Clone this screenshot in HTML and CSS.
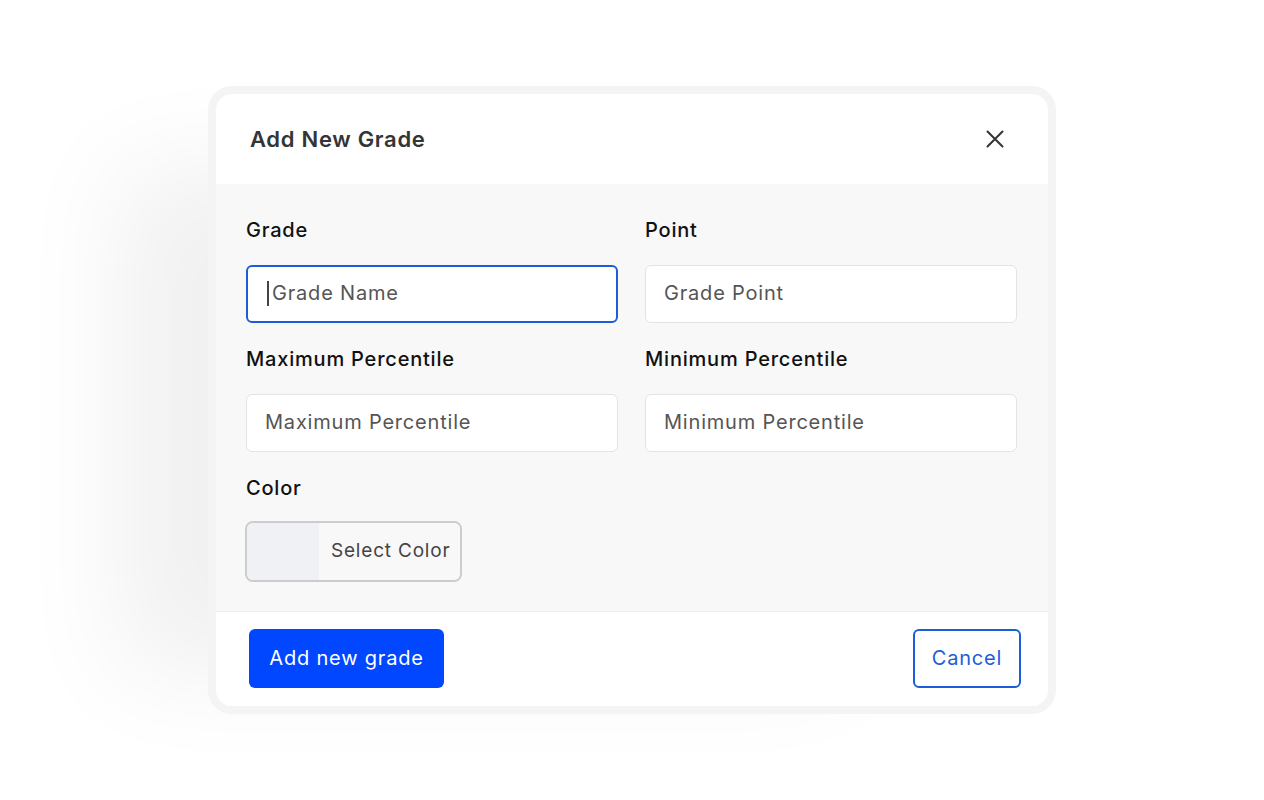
FILE: index.html
```html
<!DOCTYPE html>
<html lang="en">
<head>
    <meta charset="UTF-8">
    <title>Add New Grade</title>
    <link rel="stylesheet" href="styles.css">
</head>
<body>

    <div class="modal-frame">
        <div class="modal">

            <!-- Header -->
            <div class="modal-header">
                <h2 class="modal-title">Add New Grade</h2>
                <button class="close-btn" aria-label="Close">
                    <svg width="18" height="18" viewBox="0 0 18 18" fill="none" stroke="#333" stroke-width="2" stroke-linecap="round">
                        <path d="M1.5 1.5L16.5 16.5M16.5 1.5L1.5 16.5"/>
                    </svg>
                </button>
            </div>

            <!-- Form -->
            <div class="modal-body">
                <div class="form-grid">
                    <div class="field">
                        <label>Grade</label>
                        <div class="input focused"><span class="caret"></span>Grade Name</div>
                    </div>
                    <div class="field">
                        <label>Point</label>
                        <div class="input">Grade Point</div>
                    </div>
                    <div class="field">
                        <label>Maximum Percentile</label>
                        <div class="input">Maximum Percentile</div>
                    </div>
                    <div class="field">
                        <label>Minimum Percentile</label>
                        <div class="input">Minimum Percentile</div>
                    </div>
                    <div class="field">
                        <label>Color</label>
                        <div class="color-picker">
                            <span class="swatch"></span>
                            <span class="color-text">Select Color</span>
                        </div>
                    </div>
                </div>
            </div>

            <!-- Footer -->
            <div class="modal-footer">
                <button class="btn btn-primary">Add new grade</button>
                <button class="btn btn-outline">Cancel</button>
            </div>

        </div>
    </div>

</body>
</html>
```

FILE: styles.css
```css
body {
    margin: 0;
    height: 100vh;
    background: #fff;
    display: flex;
    justify-content: center;
    align-items: center;
    font-family: Inter, "Noto Sans", sans-serif;
    letter-spacing: 0.8px;
}

.modal-frame {
    border: 8px solid #f4f4f4;
    border-radius: 24px;
    background: #f4f4f4;
    box-shadow: -150px 20px 100px -60px rgba(0, 0, 0, 0.06);
}

.modal {
    width: 832px;
    border-radius: 16px;
    overflow: hidden;
    background: #fff;
}

.modal-header {
    height: 90px;
    padding: 0 44px 0 34px;
    display: flex;
    align-items: center;
    justify-content: space-between;
}

.modal-title {
    margin: 0;
    font-size: 22px;
    font-weight: 600;
    color: #333538;
    letter-spacing: 0.7px;
}

.close-btn {
    border: none;
    background: none;
    padding: 0;
    width: 18px;
    height: 18px;
    display: flex;
}

.modal-body {
    background: #f8f8f8;
    padding: 34px 31px 29px 30px;
    border-bottom: 1px solid #eeeeee;
}

.form-grid {
    display: grid;
    grid-template-columns: 372px 372px;
    column-gap: 27px;
    row-gap: 24px;
}

.field label {
    display: block;
    font-size: 20px;
    font-weight: 500;
    color: #111;
    line-height: 24px;
    margin-bottom: 23px;
}

.input {
    box-sizing: border-box;
    height: 58px;
    background: #fff;
    border: 1px solid #e4e4e4;
    border-radius: 6px;
    padding: 0 18px 2px;
    display: flex;
    align-items: center;
    font-size: 20px;
    color: #555;
}

.input.focused {
    border: 2px solid #1c5ed8;
    padding: 0 17px 2px 19px;
}

.caret {
    width: 2px;
    height: 25px;
    background: #444;
    margin-right: 3px;
}

.color-picker {
    width: 217px;
    height: 61px;
    box-sizing: border-box;
    border: 2px solid #cccccc;
    border-radius: 8px;
    overflow: hidden;
    display: flex;
    margin-left: -1px;
    margin-top: -2px;
}

.swatch {
    width: 72px;
    background: #f0f1f5;
}

.color-text {
    flex: 1;
    display: flex;
    align-items: center;
    padding: 0 0 2px 12px;
    font-size: 19px;
    color: #444;
    background: #f8f8f8;
}

.modal-footer {
    background: #fff;
    padding: 17px 27px 18px 33px;
    display: flex;
    justify-content: space-between;
}

.btn {
    height: 59px;
    border-radius: 6px;
    font-family: inherit;
    font-size: 20px;
    letter-spacing: 0.8px;
    padding-bottom: 2px;
    cursor: pointer;
}

.btn-primary {
    width: 195px;
    background: #0047ff;
    color: #fff;
    border: none;
}

.btn-outline {
    width: 108px;
    background: #fff;
    color: #1c5ed8;
    border: 2px solid #1c5ed8;
}
```
